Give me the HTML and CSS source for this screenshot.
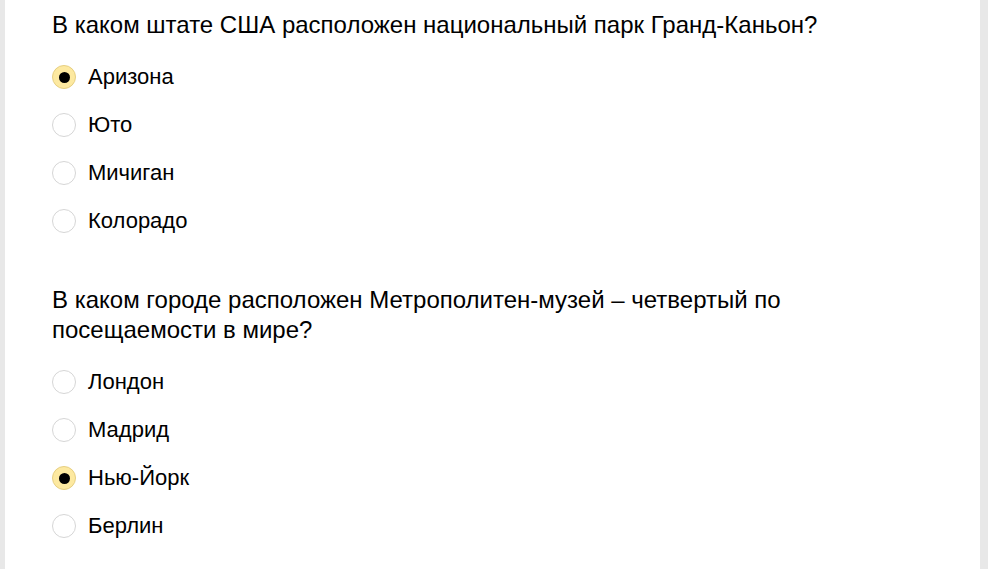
FILE: index.html
```html
<!DOCTYPE html>
<html lang="ru">
<head>
<meta charset="utf-8">
<title>Викторина</title>
<link rel="stylesheet" href="styles.css">
</head>
<body>
<div class="page">
  <div class="block">
    <p class="question">В каком штате США расположен национальный парк Гранд-Каньон?</p>
    <ul class="options">
      <li class="option"><span class="radio checked"></span><span class="label">Аризона</span></li>
      <li class="option"><span class="radio"></span><span class="label">Юто</span></li>
      <li class="option"><span class="radio"></span><span class="label">Мичиган</span></li>
      <li class="option"><span class="radio"></span><span class="label">Колорадо</span></li>
    </ul>
  </div>
  <div class="block">
    <p class="question">В каком городе расположен Метрополитен-музей – четвертый по<br>посещаемости в мире?</p>
    <ul class="options">
      <li class="option"><span class="radio"></span><span class="label">Лондон</span></li>
      <li class="option"><span class="radio"></span><span class="label">Мадрид</span></li>
      <li class="option"><span class="radio checked"></span><span class="label">Нью-Йорк</span></li>
      <li class="option"><span class="radio"></span><span class="label">Берлин</span></li>
    </ul>
  </div>
</div>
</body>
</html>
```
FILE: styles.css
```css
html, body {
  margin: 0;
  padding: 0;
  height: 100%;
}
body {
  background: #e8e8e8;
  font-family: "Liberation Sans", Arial, sans-serif;
  color: #000;
  overflow: hidden;
}
.page {
  background: #fff;
  margin: 0 8px 0 5px;
  min-height: 100%;
  padding: 10px 0 0 47px;
  box-sizing: border-box;
}
.block + .block {
  margin-top: 40px;
}
.question {
  margin: 0;
  font-size: 24px;
  line-height: 30px;
}
.options {
  list-style: none;
  margin: 13px 0 0;
  padding: 0;
}
.option {
  display: flex;
  align-items: center;
  height: 48px;
}
.radio {
  width: 24px;
  height: 24px;
  box-sizing: border-box;
  border: 1px solid #d6d6d6;
  border-radius: 50%;
  background: #fff;
  display: flex;
  align-items: center;
  justify-content: center;
  flex: none;
}
.radio.checked {
  background: #fde9a0;
  border-color: #e6cf82;
}
.radio.checked::after {
  content: "";
  width: 11px;
  height: 11px;
  border-radius: 50%;
  background: #000;
}
.label {
  margin-left: 12px;
  font-size: 22px;
  line-height: 30px;
}
```
